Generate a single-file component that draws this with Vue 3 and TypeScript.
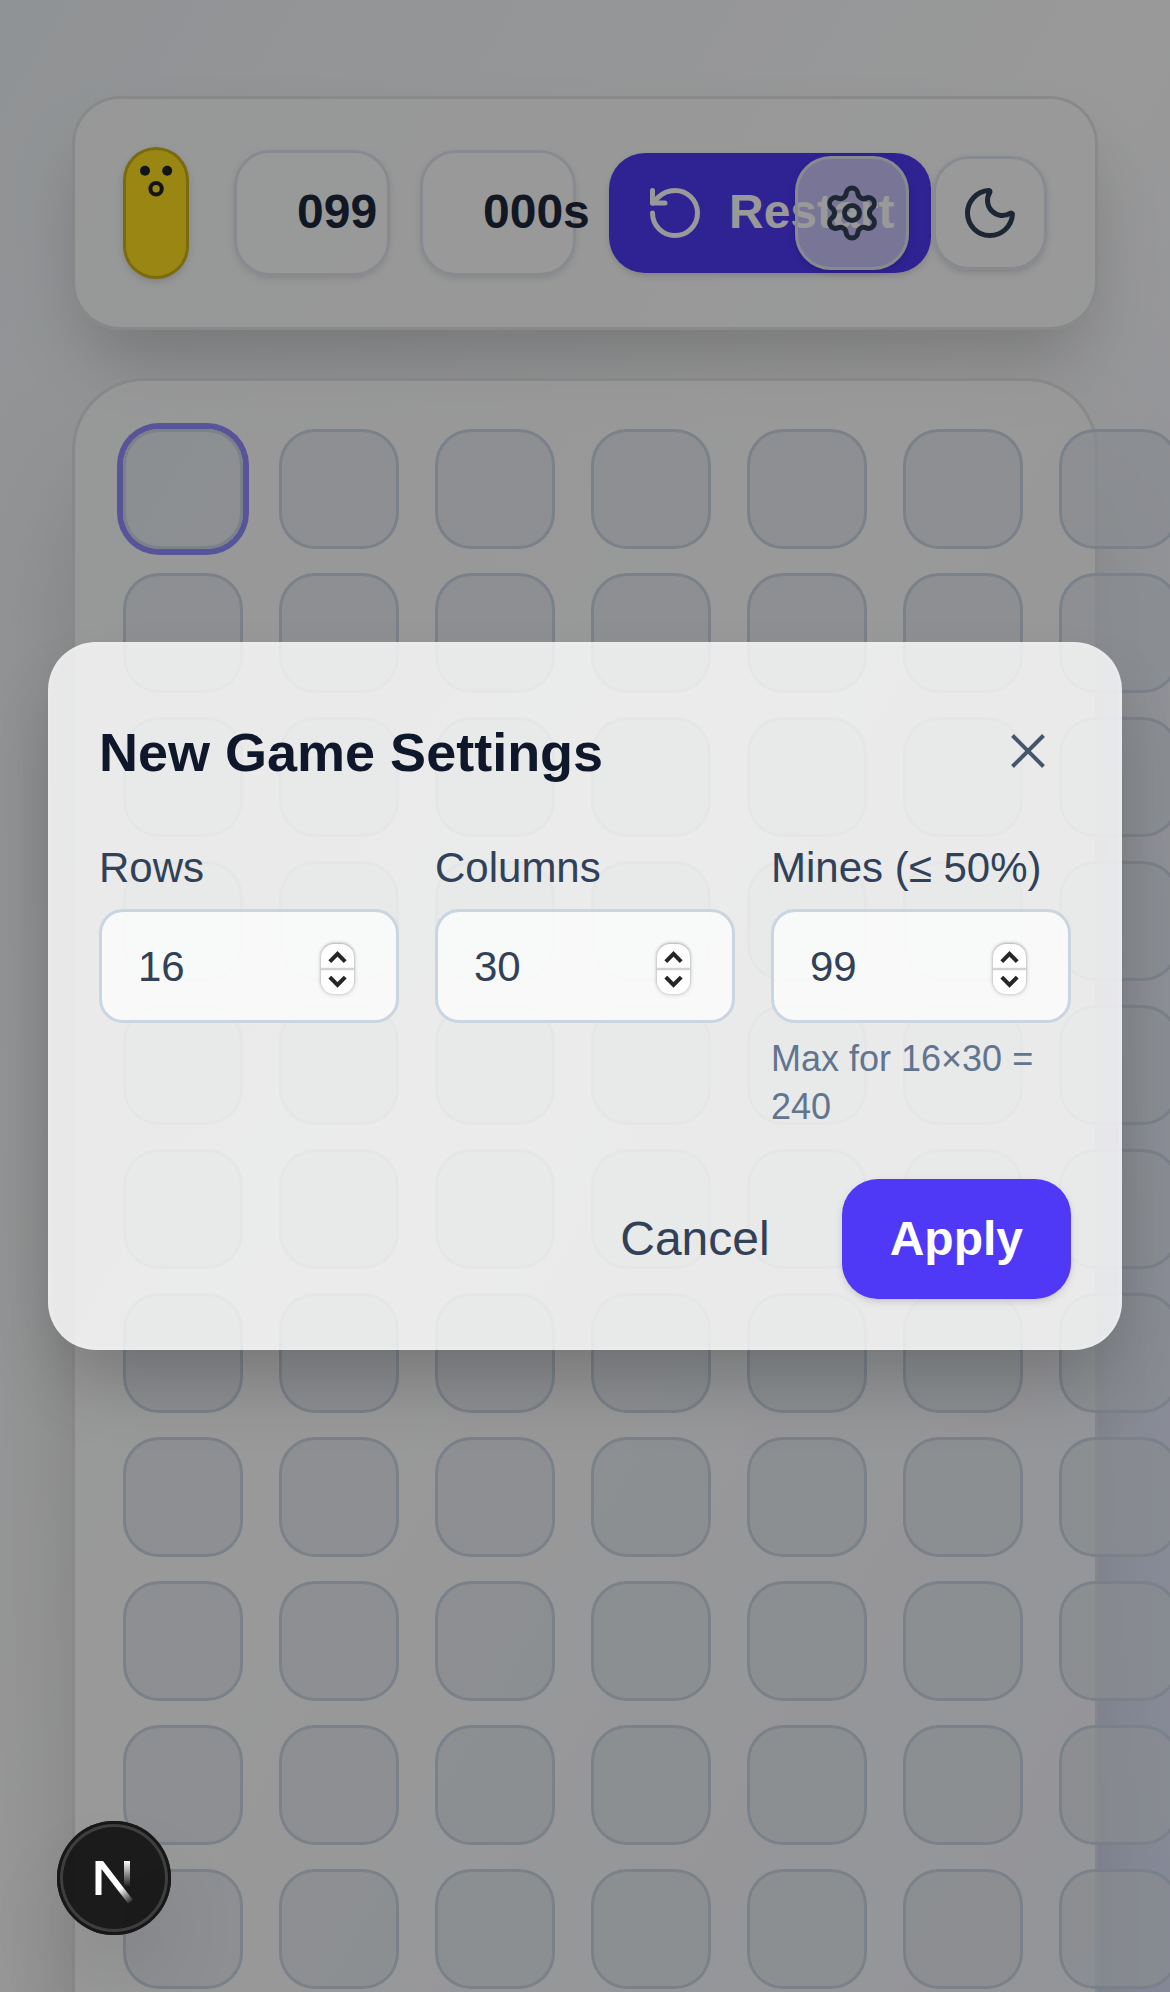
<script setup lang="ts">
import { ref } from 'vue'

interface Field {
  key: string
  label: string
  value: number
}

const totalRows = 11
const visibleCols = 7

const cells = Array.from({ length: totalRows * visibleCols }, (_, i) => i)
const flagsLeft = ref('099')
const elapsed = ref('000s')

const fields = ref<Field[]>([
  { key: 'rows', label: 'Rows', value: 16 },
  { key: 'cols', label: 'Columns', value: 30 },
  { key: 'mines', label: 'Mines (≤ 50%)', value: 99 },
])
</script>

<template>
  <div class="page">
    <header class="toolbar">
      <svg class="face" viewBox="0 0 66 132">
        <circle cx="22" cy="23.7" r="5" fill="#222" />
        <circle cx="44.2" cy="23.7" r="5" fill="#222" />
        <circle cx="33.1" cy="41.7" r="5.7" fill="none" stroke="#222" stroke-width="4" />
      </svg>
      <div class="counter mines">{{ flagsLeft }}</div>
      <div class="counter timer">{{ elapsed }}</div>
      <button class="restart" type="button">
        <svg class="icon" viewBox="0 0 24 24">
          <path d="M3 12a9 9 0 1 0 9-9 9.75 9.75 0 0 0-6.74 2.74L3 8" />
          <path d="M3 3v5h5" />
        </svg>
        <span>Restart</span>
      </button>
      <button class="square settings" type="button" aria-label="Settings">
        <svg class="icon" viewBox="0 0 24 24">
          <path d="M9.671 4.136a2.34 2.34 0 0 1 4.659 0 2.34 2.34 0 0 0 3.319 1.915 2.34 2.34 0 0 1 2.33 4.033 2.34 2.34 0 0 0 0 3.831 2.34 2.34 0 0 1-2.33 4.033 2.34 2.34 0 0 0-3.319 1.915 2.34 2.34 0 0 1-4.659 0 2.34 2.34 0 0 0-3.32-1.915 2.34 2.34 0 0 1-2.33-4.033 2.34 2.34 0 0 0 0-3.831A2.34 2.34 0 0 1 6.35 6.051a2.34 2.34 0 0 0 3.319-1.915" />
          <circle cx="12" cy="12" r="3" />
        </svg>
      </button>
      <button class="square theme" type="button" aria-label="Theme">
        <svg class="icon" viewBox="0 0 24 24">
          <path d="M20.985 12.486a9 9 0 1 1-9.473-9.472c.405-.022.617.46.402.803a6 6 0 0 0 8.268 8.268c.344-.215.825-.004.803.401" />
        </svg>
      </button>
    </header>

    <main class="board">
      <div class="grid">
        <div v-for="c in cells" :key="c" class="cell" :class="{ focused: c === 0 }"></div>
      </div>
    </main>

    <div class="overlay">
      <section class="modal">
        <div class="modal-head">
          <h2>New Game Settings</h2>
          <svg class="close" viewBox="0 0 36 36">
            <path d="M2.5 2.5 33.5 33.5M33.5 2.5 2.5 33.5" />
          </svg>
        </div>
        <div class="fields">
          <div v-for="f in fields" :key="f.key" class="field">
            <label>{{ f.label }}</label>
            <div class="input">
              <span class="value">{{ f.value }}</span>
              <span class="spinner">
                <svg viewBox="0 0 33 50">
                  <path class="split" d="M0 25H33" />
                  <path d="M8.8 17.600 16.500 9.800 24.200 17.600" />
                  <path d="M8.8 33.200 16.500 41 24.200 33.200" />
                </svg>
              </span>
            </div>
            <p v-if="f.key === 'mines'" class="hint">Max for 16×30 = 240</p>
          </div>
        </div>
        <div class="actions">
          <button class="cancel" type="button">Cancel</button>
          <button class="apply" type="button">Apply</button>
        </div>
      </section>
    </div>

    <div class="dev-badge">
      <svg viewBox="0 0 114 114">
        <defs>
          <linearGradient id="diag" gradientUnits="userSpaceOnUse" x1="64" y1="67" x2="75" y2="82">
            <stop offset="0" stop-color="#fff" />
            <stop offset="1" stop-color="#fff" stop-opacity="0" />
          </linearGradient>
          <linearGradient id="stem" gradientUnits="userSpaceOnUse" x1="0" y1="40" x2="0" y2="66">
            <stop offset="0" stop-color="#fff" />
            <stop offset="1" stop-color="#fff" stop-opacity="0" />
          </linearGradient>
        </defs>
        <rect x="67" y="40" width="6" height="26" fill="url(#stem)" />
        <path d="M38.5 40H46L76 79Q73.500 81.500 71 82.500L44.500 48V74H38.500Z" fill="url(#diag)" />
      </svg>
    </div>
  </div>
</template>

<style>
html,
body {
  margin: 0;
  overflow: hidden;
}
</style>

<style scoped>
.page {
  position: relative;
  box-sizing: border-box;
  width: 1170px;
  height: 1992px;
  padding: 96px 72px 0;
  overflow: hidden;
  font-family: 'Liberation Sans', Arial, sans-serif;
  color: #1d293d;
  background: linear-gradient(to bottom right, #f1f5f9, #fff 50%, #e0e7ff);
}
.page * {
  box-sizing: border-box;
}
button {
  font: inherit;
  border: 0;
  margin: 0;
  padding: 0;
  flex: none;
}
.icon {
  width: 60px;
  height: 60px;
  flex: none;
  fill: none;
  stroke: currentColor;
  stroke-width: 2;
  stroke-linecap: round;
  stroke-linejoin: round;
}

.toolbar {
  display: flex;
  align-items: center;
  height: 234px;
  padding: 0 48px;
  border: 3px solid rgba(0, 0, 0, 0.1);
  border-radius: 48px;
  background: rgba(255, 255, 255, 0.7);
  box-shadow: 0 40px 75px -15px rgba(0, 0, 0, 0.22);
}
.face {
  flex: none;
  width: 66px;
  height: 132px;
  border-radius: 33px;
  background: #ffdf20;
  box-shadow: inset 0 0 0 3px rgba(0, 0, 0, 0.2), 0 3px 9px rgba(0, 0, 0, 0.1), 0 3px 6px -3px rgba(0, 0, 0, 0.1);
}
.counter {
  flex: none;
  width: 156px;
  height: 126px;
  padding-left: 60px;
  border: 3px solid #e2e8f0;
  border-radius: 36px;
  background: rgba(255, 255, 255, 0.7);
  box-shadow: 0 3px 9px rgba(0, 0, 0, 0.08), 0 3px 6px -3px rgba(0, 0, 0, 0.08);
  font-size: 48px;
  font-weight: 700;
  line-height: 118px;
  white-space: nowrap;
}
.mines {
  margin-left: 45px;
}
.timer {
  margin-left: 30px;
}
.restart {
  display: flex;
  align-items: center;
  gap: 24px;
  width: 322px;
  height: 120px;
  margin-left: 33px;
  padding: 0 36px;
  border-radius: 36px;
  background: #4f39f6;
  color: #fff;
  font-size: 48px;
  font-weight: 700;
  box-shadow: 0 3px 9px rgba(0, 0, 0, 0.1), 0 3px 6px -3px rgba(0, 0, 0, 0.1);
}
.restart span {
  margin-top: -3px;
}
.square {
  display: flex;
  align-items: center;
  justify-content: center;
  width: 114px;
  height: 114px;
  border: 3px solid #e2e8f0;
  border-radius: 36px;
  background: rgba(255, 255, 255, 0.7);
  color: #314158;
  box-shadow: 0 3px 9px rgba(0, 0, 0, 0.1), 0 3px 6px -3px rgba(0, 0, 0, 0.1);
}
.settings {
  margin-left: -136px;
}
.theme {
  margin-left: 24px;
}

.board {
  height: 2460px;
  margin-top: 48px;
  padding: 48px;
  border: 3px solid rgba(0, 0, 0, 0.1);
  border-radius: 72px;
  background: rgba(255, 255, 255, 0.7);
  box-shadow: 0 75px 150px -36px rgba(0, 0, 0, 0.25);
}
.grid {
  display: grid;
  grid-template-columns: repeat(7, 120px);
  grid-auto-rows: 120px;
  gap: 24px 36px;
}
.cell {
  border: 3px solid rgba(202, 213, 226, 0.9);
  border-radius: 36px;
  background: rgba(226, 232, 240, 0.7);
}
.focused {
  box-shadow: 0 0 0 6px #938cff;
}

.overlay {
  position: absolute;
  inset: 0;
  display: flex;
  align-items: center;
  justify-content: center;
  background: rgba(0, 0, 0, 0.4);
}
.modal {
  width: 1074px;
  padding: 48px;
  border: 3px solid rgba(255, 255, 255, 0.1);
  border-radius: 48px;
  background: rgba(255, 255, 255, 0.8);
  box-shadow: 0 40px 75px -15px rgba(0, 0, 0, 0.24);
}
.modal-head {
  display: flex;
  align-items: center;
  justify-content: space-between;
  height: 120px;
  margin-bottom: 24px;
  padding-right: 25.5px;
}
h2 {
  margin: -2px 0 0;
  color: #0f172b;
  font-size: 54px;
  font-weight: 700;
  line-height: 84px;
}
.close {
  width: 36px;
  height: 36px;
  margin-top: -4px;
  fill: none;
  stroke: #45556c;
  stroke-width: 4;
}
.fields {
  display: grid;
  grid-template-columns: repeat(3, 1fr);
  gap: 36px;
}
label {
  display: block;
  margin-bottom: 12px;
  padding-top: 1px;
  height: 60px;
  color: #314158;
  font-size: 42px;
  line-height: 60px;
  white-space: nowrap;
}
.input {
  display: flex;
  align-items: center;
  justify-content: space-between;
  height: 114px;
  padding: 0 42px 0 36px;
  border: 3px solid #cad5e2;
  border-radius: 24px;
  background: rgba(255, 255, 255, 0.7);
  color: #314158;
  font-size: 42px;
}
.value {
  margin-top: 2px;
}
.spinner {
  width: 33px;
  height: 50px;
  margin-top: 5px;
  border-radius: 13px;
  background: #fff;
  box-shadow: 0 -1px 3px rgba(0, 0, 0, 0.28), 0 1px 5px rgba(0, 0, 0, 0.16);
}
.spinner svg {
  display: block;
  width: 33px;
  height: 50px;
  fill: none;
  stroke: #262626;
  stroke-width: 4;
}
.spinner .split {
  stroke: #d4d4d4;
  stroke-width: 2.5;
}
.hint {
  margin: 12px 0 0;
  color: #62748e;
  font-size: 36px;
  line-height: 48px;
}
.actions {
  display: flex;
  justify-content: flex-end;
  gap: 24px;
  margin-top: 48px;
}
.actions button {
  height: 120px;
  padding: 0 48px 2px;
  border-radius: 36px;
  font-size: 48px;
}
.cancel {
  background: none;
  color: #314158;
}
.actions .apply {
  background: #4f39f6;
  color: #fff;
  font-weight: 700;
  box-shadow: 0 3px 9px rgba(0, 0, 0, 0.1), 0 3px 6px -3px rgba(0, 0, 0, 0.1);
}

.dev-badge {
  position: absolute;
  left: 57px;
  top: 1821px;
  width: 114px;
  height: 114px;
  border-radius: 50%;
  background: rgba(20, 20, 20, 0.95);
  box-shadow: inset 0 0 0 3px #171717, inset 0 0 0 6px #3e3e3e, 0 48px 96px -24px rgba(0, 0, 0, 0.24);
}
.dev-badge svg {
  display: block;
  width: 114px;
  height: 114px;
}
</style>
